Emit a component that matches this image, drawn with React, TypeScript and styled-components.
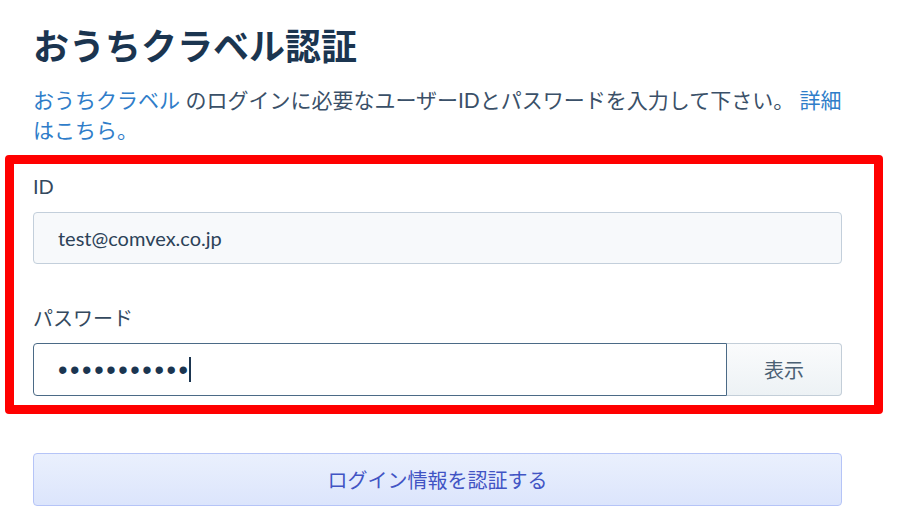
import styled, { createGlobalStyle } from 'styled-components';

const GlobalStyle = createGlobalStyle`
    html, body {
        margin: 0;
        padding: 0;
        background: #ffffff;
    }
    body {
        font-family: Lato, "Noto Sans CJK JP", sans-serif;
        color: #34495e;
    }
`;

const Page = styled.div`
    width: 809px;
    padding: 23px 0 0 33px;
`;

const Title = styled.h1`
    margin: 0;
    font-family: "Noto Sans CJK JP", sans-serif;
    font-size: 36px;
    font-weight: 700;
    line-height: 43px;
    color: #1b3550;
`;

const Lead = styled.p`
    margin: 19px 0 0;
    font-size: 21px;
    line-height: 30px;
    color: #3a5068;
`;

const Link = styled.a`
    color: #2f7dc9;
    text-decoration: none;
`;

const HighlightBox = styled.div`
    margin: 10px -41px 0 -28px;
    padding: 7px 32px 9px 19px;
    border: 9px solid #ff0000;
    border-radius: 4px;
`;

const Field = styled.div<{ $gap: number }>`
    display: flex;
    flex-direction: column;
    gap: ${p => p.$gap}px;
    & + & {
        margin-top: 39px;
    }
`;

const Label = styled.label`
    font-size: 20px;
    line-height: 30px;
    color: #34495e;
`;

const TextInput = styled.input`
    box-sizing: border-box;
    width: 100%;
    height: 52px;
    padding: 0 24px;
    border: 1px solid #c3cfdb;
    border-radius: 4px;
    background: #f7f9fb;
    font-family: Lato, sans-serif;
    font-size: 20px;
    color: #2c4258;
    outline: none;
`;

const PasswordRow = styled.div`
    display: flex;
    height: 53px;
`;

const PasswordInput = styled.div`
    box-sizing: border-box;
    flex: 1;
    display: flex;
    align-items: center;
    padding: 0 24px;
    border: 1px solid #4b6a86;
    border-radius: 4px 0 0 4px;
    background: #ffffff;
`;

const Dots = styled.span`
    font-family: "Liberation Sans", sans-serif;
    font-size: 27px;
    line-height: 1;
    letter-spacing: 2.6px;
    color: #1b3550;
    margin: 2px -2px 0 0;
`;

const Caret = styled.span`
    display: inline-block;
    width: 2px;
    height: 25px;
    background: #1b3550;
`;

const ShowButton = styled.button`
    width: 115px;
    border: 1px solid #c3ced8;
    border-left: none;
    border-radius: 0 4px 4px 0;
    background: linear-gradient(#fafbfc, #edf2f5);
    font-family: "Noto Sans CJK JP", sans-serif;
    font-size: 20px;
    color: #4a6074;
    cursor: pointer;
`;

const SubmitButton = styled.button`
    display: block;
    width: 100%;
    height: 53px;
    margin-top: 39px;
    border: 1px solid #b5c4f7;
    border-radius: 4px;
    background: linear-gradient(#eaf0fd, #dce5fc);
    font-family: "Noto Sans CJK JP", sans-serif;
    font-size: 20px;
    color: #4154c4;
    cursor: pointer;
`;

const App = () => {
    return (
        <>
            <GlobalStyle />
            <Page>
                <Title>おうちクラベル認証</Title>
                <Lead>
                    <Link href="#">おうちクラベル</Link> のログインに必要なユーザーIDとパスワードを入力して下さい。 <Link href="#">詳細はこちら。</Link>
                </Lead>
                <HighlightBox>
                    <Field $gap={11}>
                        <Label>ID</Label>
                        <TextInput defaultValue="test@comvex.co.jp" />
                    </Field>
                    <Field $gap={10}>
                        <Label>パスワード</Label>
                        <PasswordRow>
                            <PasswordInput>
                                <Dots>•••••••••••</Dots>
                                <Caret />
                            </PasswordInput>
                            <ShowButton>表示</ShowButton>
                        </PasswordRow>
                    </Field>
                </HighlightBox>
                <SubmitButton>ログイン情報を認証する</SubmitButton>
            </Page>
        </>
    )
}

export default App
